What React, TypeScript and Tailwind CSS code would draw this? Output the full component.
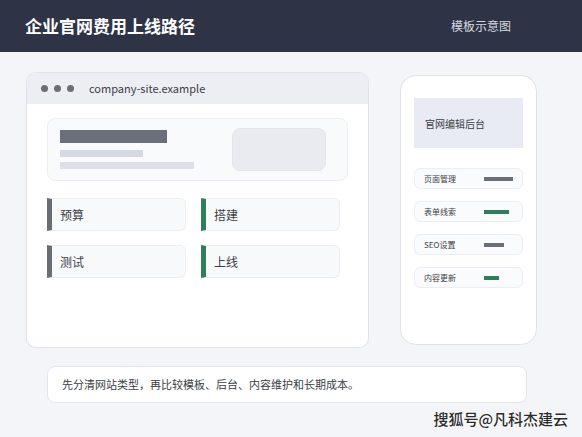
const font = { fontFamily: '"Noto Sans CJK SC", "Noto Sans", sans-serif' };

const steps = [
  { label: '预算', tone: 'border-l-[#6b6d74]' },
  { label: '搭建', tone: 'border-l-[#2f7d5b]' },
  { label: '测试', tone: 'border-l-[#6b6d74]' },
  { label: '上线', tone: 'border-l-[#2f7d5b]' },
];

const menu = [
  { label: '页面管理', bar: 'w-[29px] bg-[#6b6e7c]' },
  { label: '表单线索', bar: 'w-[25px] bg-[#2f7d5b]' },
  { label: 'SEO设置', bar: 'w-[20px] bg-[#6b6e7c]' },
  { label: '内容更新', bar: 'w-[15px] bg-[#2f7d5b]' },
];

function BrowserMock() {
  return (
    <section className="h-[276px] w-[343px] overflow-hidden rounded-[10px] border border-[#e1e3e8] bg-white">
      <div className="flex h-[31px] items-center bg-[#eceef4] pl-[14px]">
        <div className="flex gap-[6px]">
          <span className="h-[7px] w-[7px] rounded-full bg-[#6c6e76]" />
          <span className="h-[7px] w-[7px] rounded-full bg-[#6c6e76]" />
          <span className="h-[7px] w-[7px] rounded-full bg-[#6c6e76]" />
        </div>
        <span className="ml-[15px] text-[11px] text-[#3a3d46]">company-site.example</span>
      </div>
      <div className="px-5 pt-[14px]">
        <div className="flex h-[63px] items-center justify-between rounded-lg border border-[#eceef1] bg-[#f9fafb] pl-3 pr-[21px]">
          <div className="flex flex-col">
            <span className="h-[13px] w-[107px] bg-[#6b6f7b]" />
            <span className="mt-[7px] h-[7px] w-[83px] bg-[#d5d9e3]" />
            <span className="mt-[5px] h-[7px] w-[134px] bg-[#dcdfe5]" />
          </div>
          <div className="h-[43px] w-[94px] rounded-lg border border-[#e3e5ea] bg-[#e9ebf0]" />
        </div>
        <div className="mt-[17px] grid w-[293px] grid-cols-2 gap-x-[15px] gap-y-[14px]">
          {steps.map((s) => (
            <div
              key={s.label}
              className={`flex h-[33px] items-center rounded-r-md border border-l-[5px] border-[#eceef1] bg-[#f8f9fb] pl-[8px] text-[12px] text-[#3b3e46] ${s.tone}`}
            >
              {s.label}
            </div>
          ))}
        </div>
      </div>
    </section>
  );
}

function PhoneMock() {
  return (
    <section className="h-[270px] w-[137px] rounded-[16px] border border-[#dfe2e8] bg-white px-[13px] pt-[22px]">
      <div className="flex h-[50px] items-center bg-[#e8ebf3] pl-[11px] text-[10px] text-[#3b3e46]">官网编辑后台</div>
      <div className="mt-[20px] flex flex-col gap-[12px]">
        {menu.map((m) => (
          <div
            key={m.label}
            className="flex h-[21px] items-center rounded-md border border-[#eceef1] bg-[#fafbfc] pl-[9px] text-[8px] text-[#3b3e46]"
          >
            <span className="w-[60px]">{m.label}</span>
            <span className={`h-[4px] ${m.bar}`} />
          </div>
        ))}
      </div>
    </section>
  );
}

export default function App() {
  return (
    <div className="relative h-[437px] w-[582px] overflow-hidden bg-[#f4f5f8]" style={font}>
      <header className="flex h-[52px] items-center justify-between bg-[#2e3445] pl-[25px] pr-[71px]">
        <h1 className="text-[17px] font-bold text-white">企业官网费用上线路径</h1>
        <span className="text-[12px] text-[#d6d9e1]">模板示意图</span>
      </header>
      <main className="flex items-center gap-[31px] pl-[26px] pt-[20px]">
        <BrowserMock />
        <PhoneMock />
      </main>
      <div className="ml-[47px] mt-[18px] flex h-[37px] w-[480px] items-center rounded-lg border border-[#e3e5ea] bg-white pl-[14px] text-[11px] text-[#3b3e46]">
        先分清网站类型，再比较模板、后台、内容维护和长期成本。
      </div>
      <div className="absolute bottom-[7px] right-[14px] text-[15px] font-medium text-[#2b2b2b] [text-shadow:0_0_2px_#fff,0_0_2px_#fff]">
        搜狐号@凡科杰建云
      </div>
    </div>
  );
}
